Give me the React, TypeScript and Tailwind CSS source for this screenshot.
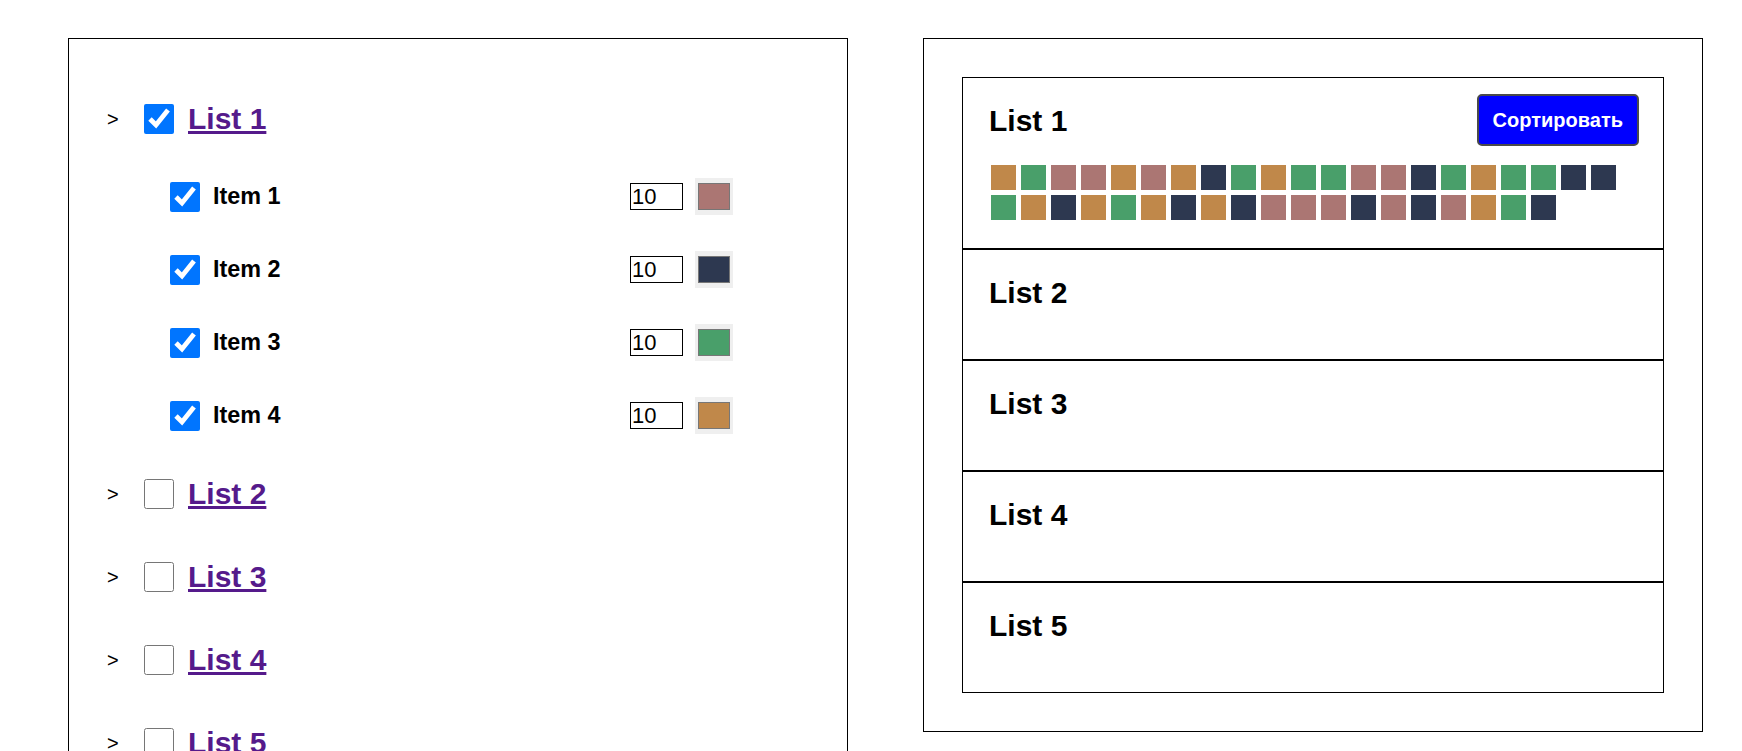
import React from 'react';

const COLORS: Record<string, string> = {
  O: '#c0884a',
  G: '#499f6a',
  R: '#ab7673',
  N: '#2d3850',
};

const items = [
  { name: 'Item 1', count: 10, color: COLORS.R },
  { name: 'Item 2', count: 10, color: COLORS.N },
  { name: 'Item 3', count: 10, color: COLORS.G },
  { name: 'Item 4', count: 10, color: COLORS.O },
];

// shuffled squares shown in the first list
const squares = 'OGRRORONGOGGRRNGOGGNNGONOGONONRRRNRNROGN'.split('');

const lists = ['List 1', 'List 2', 'List 3', 'List 4', 'List 5'];

const Checkbox: React.FC<{ checked?: boolean }> = ({ checked }) => (
  <input type="checkbox" defaultChecked={checked} className="w-[30px] h-[30px] m-0 shrink-0" />
);

const ItemRow: React.FC<{ name: string; count: number; color: string }> = ({ name, count, color }) => (
  <div className="flex items-center h-[73px] w-[626px] pl-[63px]">
    <Checkbox checked />
    <span className="ml-[13px] text-[23.4px] font-bold text-black">{name}</span>
    <input
      type="number"
      defaultValue={count}
      className="ml-auto w-[53px] h-[27px] border border-black text-[22px] leading-none pl-[1px] text-black"
    />
    <div className="ml-[12px] w-[38px] h-[37px] bg-[#efefef] flex items-center justify-center">
      <div className="w-[32px] h-[27px] border border-[#777]" style={{ backgroundColor: color }} />
    </div>
  </div>
);

const TreeList: React.FC<{ title: string; open?: boolean }> = ({ title, open }) => (
  <div>
    <div className="flex items-center h-[83px]">
      <span className="w-[37px] text-[20px] leading-none text-black">&gt;</span>
      <Checkbox checked={open} />
      <a href="#" className="ml-[14px] text-[30px] font-bold underline text-[#551a8b]">
        {title}
      </a>
    </div>
    {open && items.map((it) => <ItemRow key={it.name} {...it} />)}
  </div>
);

const BoardRow: React.FC<{ title: string; withSquares?: boolean }> = ({ title, withSquares }) => (
  <div className={`border border-black pl-[26px] pr-[24px] pt-[16px] ${withSquares ? '' : 'pb-[41px]'}`}>
    <div className="flex items-center justify-between min-h-[52px]">
      <h2 className="text-[30px] font-bold text-black">{title}</h2>
      {withSquares && (
        <button className="h-[52px] px-[14px] border-2 border-[#4a4a4a] rounded-[5px] bg-[#0000ff] text-white text-[20px] font-bold">
          Сортировать
        </button>
      )}
    </div>
    {withSquares && (
      <div className="flex flex-wrap gap-[5px] pl-[2px] pt-[19px] pb-[28px]">
        {squares.map((c, i) => (
          <div key={i} className="w-[25px] h-[25px]" style={{ backgroundColor: COLORS[c] }} />
        ))}
      </div>
    )}
  </div>
);

export default function App() {
  return (
    <div className="min-h-screen bg-white flex items-start gap-[75px] pl-[68px] pt-[38px] font-['Liberation_Sans',Arial,sans-serif]">
      <div className="w-[780px] shrink-0 border border-black p-[38px]">
        {lists.map((l, i) => (
          <TreeList key={l} title={l} open={i === 0} />
        ))}
      </div>

      <div className="w-[780px] shrink-0 border border-black p-[38px]">
        <div className="flex flex-col">
          {lists.map((l, i) => (
            <BoardRow key={l} title={l} withSquares={i === 0} />
          ))}
        </div>
      </div>
    </div>
  );
}
